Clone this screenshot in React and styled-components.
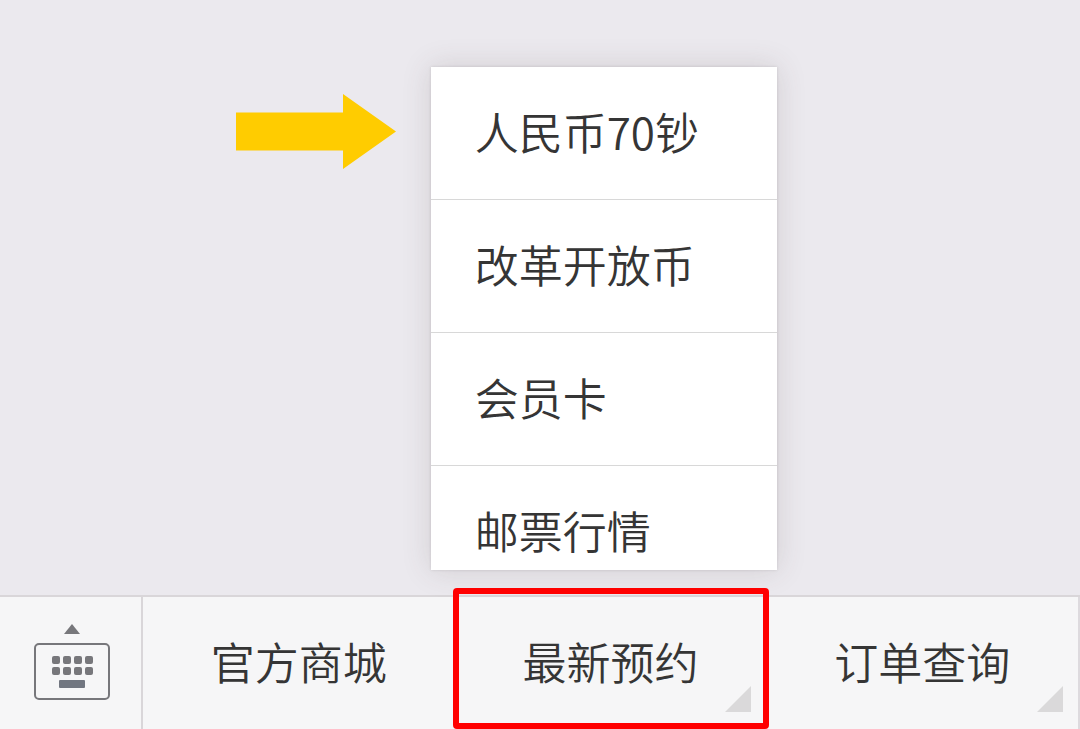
import React from "react";
import styled, { createGlobalStyle } from "styled-components";

const GlobalStyle = createGlobalStyle`
  *, *::before, *::after { box-sizing: border-box; }
  body {
    margin: 0;
    background: #ebe9ee;
    color: #353535;
    font-family: "Noto Sans CJK SC", "Noto Sans", sans-serif;
    font-size: 44px;
    font-weight: 350;
    line-height: 64px;
  }
  button {
    margin: 0;
    padding: 0;
    border: 0;
    background: none;
    color: inherit;
    font: inherit;
    cursor: pointer;
  }
`;

const Page = styled.div`
  display: flex;
  flex-direction: column;
  min-height: 100vh;
`;

const Chat = styled.main`
  flex: 1;
`;

const Toolbar = styled.nav`
  display: flex;
  height: 134px;
  background: #f6f6f7;
  border-top: 2px solid #d9d6d9;
`;

const KeyboardButton = styled.button`
  flex: none;
  display: flex;
  flex-direction: column;
  align-items: center;
  width: 143px;
  padding: 25px 0 0 2px;
  border-right: 2px solid #d9d6d9;
`;

const Tabs = styled.div`
  flex: 1;
  display: grid;
  grid-template-columns: repeat(3, 1fr);
  border-right: 2px solid #dddade;
`;

const TabItem = styled.div`
  position: relative;
  display: flex;
`;

const TabButton = styled.button`
  flex: 1;
  padding-bottom: 4px;
  white-space: nowrap;
`;

const Corner = styled.svg`
  position: absolute;
  right: 15px;
  bottom: 17px;
`;

const Highlight = styled.div`
  position: absolute;
  inset: -9px -3px 0 -2px;
  border: 6px solid #ff0000;
  border-radius: 4px;
  pointer-events: none;
`;

const Popup = styled.div`
  position: absolute;
  left: -24px;
  bottom: calc(100% + 27px);
  width: 346px;
`;

const Menu = styled.ul`
  height: 503px;
  margin: 0;
  padding: 0;
  overflow: hidden;
  list-style: none;
  background: #fff;
  box-shadow: 0 0 28px rgba(80, 60, 60, 0.16), 0 0 3px rgba(0, 0, 0, 0.12);
`;

const MenuRow = styled.li`
  height: 133px;
  border-bottom: 1px solid #d8d8d8;
`;

const MenuButton = styled.button`
  width: 100%;
  height: 100%;
  padding: 0 0 4px 44px;
  text-align: left;
  white-space: nowrap;
`;

const Pointer = styled.svg`
  position: absolute;
  top: 27px;
  right: calc(100% + 35px);
`;

const menuItems = ["人民币70钞", "改革开放币", "会员卡", "邮票行情"];

const tabs = [
  { label: "官方商城" },
  { label: "最新预约", corner: true, open: true },
  { label: "订单查询", corner: true },
];

function KeyboardIcon() {
  return (
    <svg width="76" height="78" viewBox="0 0 76 78" aria-hidden="true">
      <path d="M38 2 46 12H30Z" fill="#77777b" />
      <rect x="1" y="22" width="74" height="55" rx="4" fill="none" stroke="#77777b" strokeWidth="2" />
      <g fill="#77777b">
        {[34, 45].map((y) =>
          [18, 29, 40, 51].map((x) => (
            <rect key={`${x}-${y}`} x={x} y={y} width="8" height="8" rx="2" />
          ))
        )}
      </g>
      <rect x="25" y="58" width="26" height="8" rx="1" fill="#717680" />
    </svg>
  );
}

function PopupMenu() {
  return (
    <Popup>
      <Pointer width="160" height="75" viewBox="0 0 160 75" aria-hidden="true">
        <path d="M0 18.500H107V0L160 37.500 107 75V56.500H0Z" fill="#ffcc00" />
      </Pointer>
      <Menu>
        {menuItems.map((label) => (
          <MenuRow key={label}>
            <MenuButton type="button">{label}</MenuButton>
          </MenuRow>
        ))}
      </Menu>
    </Popup>
  );
}

export default function App() {
  return (
    <Page>
      <GlobalStyle />
      <Chat />
      <Toolbar>
        <KeyboardButton type="button" aria-label="键盘">
          <KeyboardIcon />
        </KeyboardButton>
        <Tabs>
          {tabs.map(({ label, corner, open }) => (
            <TabItem key={label}>
              <TabButton type="button">{label}</TabButton>
              {corner && (
                <Corner width="26" height="26" viewBox="0 0 26 26" aria-hidden="true">
                  <path d="M26 0V26H0Z" fill="#dad9da" />
                </Corner>
              )}
              {open && <PopupMenu />}
              {open && <Highlight />}
            </TabItem>
          ))}
        </Tabs>
      </Toolbar>
    </Page>
  );
}
